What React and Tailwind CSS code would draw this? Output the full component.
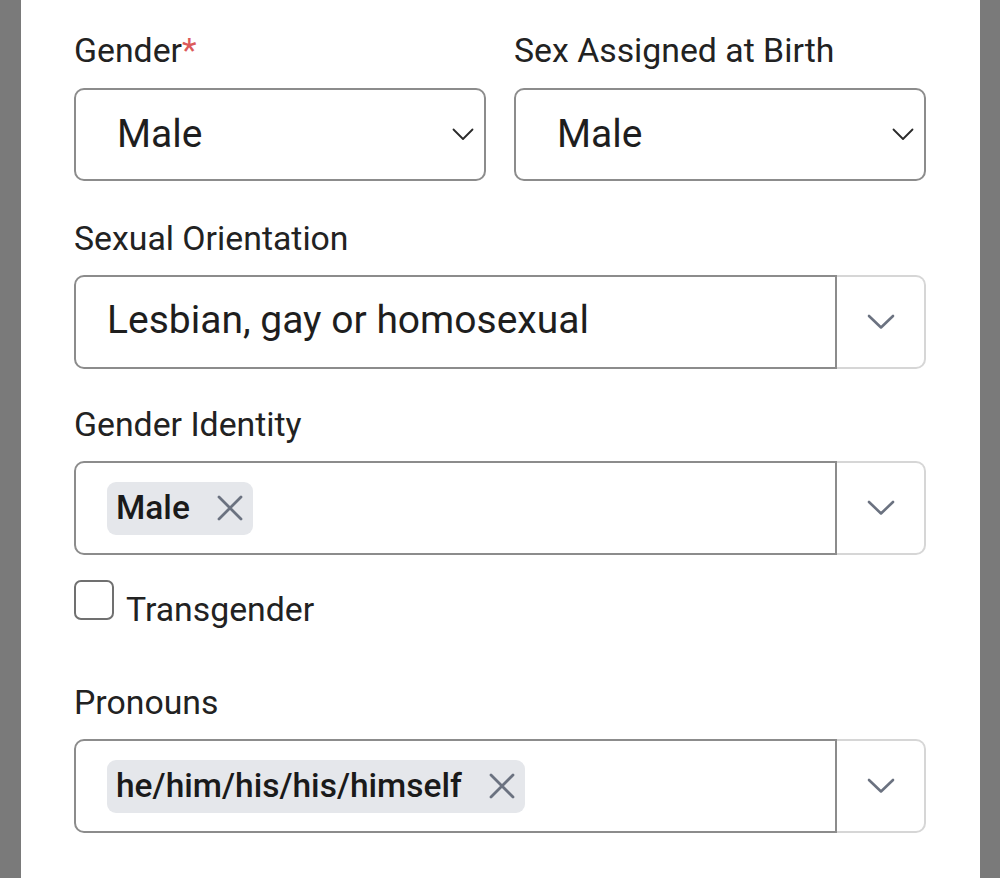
import React from "react";

function SmallChevron() {
  return (
    <svg width="22" height="13" viewBox="0 0 22 13" fill="none" className="shrink-0">
      <path d="M1.5 1.5 L11 11 L20.5 1.5" stroke="#2a2a2a" strokeWidth="1.8" strokeLinecap="round" strokeLinejoin="round" />
    </svg>
  );
}

function BigChevron() {
  return (
    <svg width="28" height="16" viewBox="0 0 28 16" fill="none">
      <path d="M2 2 L14 13.5 L26 2" stroke="#6b7280" strokeWidth="2.6" strokeLinecap="round" strokeLinejoin="round" />
    </svg>
  );
}

function XIcon() {
  return (
    <svg width="26" height="26" viewBox="0 0 26 26" fill="none">
      <path d="M2 2 L24 24 M24 2 L2 24" stroke="#6b7280" strokeWidth="2.8" strokeLinecap="round" />
    </svg>
  );
}

function Label({ children, className = "" }) {
  return (
    <div className={"text-[33.8px] leading-[48px] text-[#222222] " + className}>{children}</div>
  );
}

function NativeSelect({ value }) {
  return (
    <div className="flex h-[93px] items-center justify-between rounded-[10px] border-2 border-[#8c8c8c] pl-[41px] pr-[10px]">
      <span className="text-[39px] leading-none text-[#1e1e1e]">{value}</span>
      <SmallChevron />
    </div>
  );
}

function MultiBox({ children }) {
  return (
    <div className="flex h-[94px]">
      <div className="flex flex-1 items-center rounded-l-[10px] border-2 border-[#8c8c8c] pl-[31px]">
        {children}
      </div>
      <div className="flex w-[89px] items-center justify-center rounded-r-[10px] border-2 border-l-0 border-[#d6d6d6]">
        <BigChevron />
      </div>
    </div>
  );
}

function Chip({ text }) {
  return (
    <div className="flex h-[53px] items-center gap-[27px] rounded-[9px] bg-[#e5e7eb] pl-[9px] pr-[10px]">
      <span className="text-[33.5px] font-medium leading-none text-[#1a1a1a]">{text}</span>
      <XIcon />
    </div>
  );
}

export default function App() {
  return (
    <div
      className="flex min-h-[878px] w-full bg-[#7a7a7a]"
      style={{ fontFamily: "Roboto, 'Noto Sans', sans-serif" }}
    >
      <div className="ml-[21px] mr-[20px] flex-1 bg-white pl-[53px] pr-[54px] pt-[27px]">
        <div className="grid grid-cols-2 gap-x-[28px]">
          <div>
            <Label className="mb-[13px]">
              Gender<span className="text-[#dc5a5a]">*</span>
            </Label>
            <NativeSelect value="Male" />
          </div>
          <div>
            <Label className="mb-[13px]">Sex Assigned at Birth</Label>
            <NativeSelect value="Male" />
          </div>
        </div>

        <Label className="mt-[34px] mb-[12px]">Sexual Orientation</Label>
        <MultiBox>
          <span className="-mt-[3px] text-[39px] leading-none text-[#1e1e1e]">Lesbian, gay or homosexual</span>
        </MultiBox>

        <Label className="mt-[32px] mb-[12px]">Gender Identity</Label>
        <MultiBox>
          <Chip text="Male" />
        </MultiBox>

        <div className="mt-[25px] flex items-start gap-[12px]">
          <div className="h-[40px] w-[40px] rounded-[7px] border-2 border-[#707070]" />
          <span className="mt-[6px] text-[33.8px] leading-[48px] text-[#222222]">Transgender</span>
        </div>

        <Label className="mt-[45px] mb-[12px]">Pronouns</Label>
        <MultiBox>
          <Chip text="he/him/his/his/himself" />
        </MultiBox>
      </div>
    </div>
  );
}
